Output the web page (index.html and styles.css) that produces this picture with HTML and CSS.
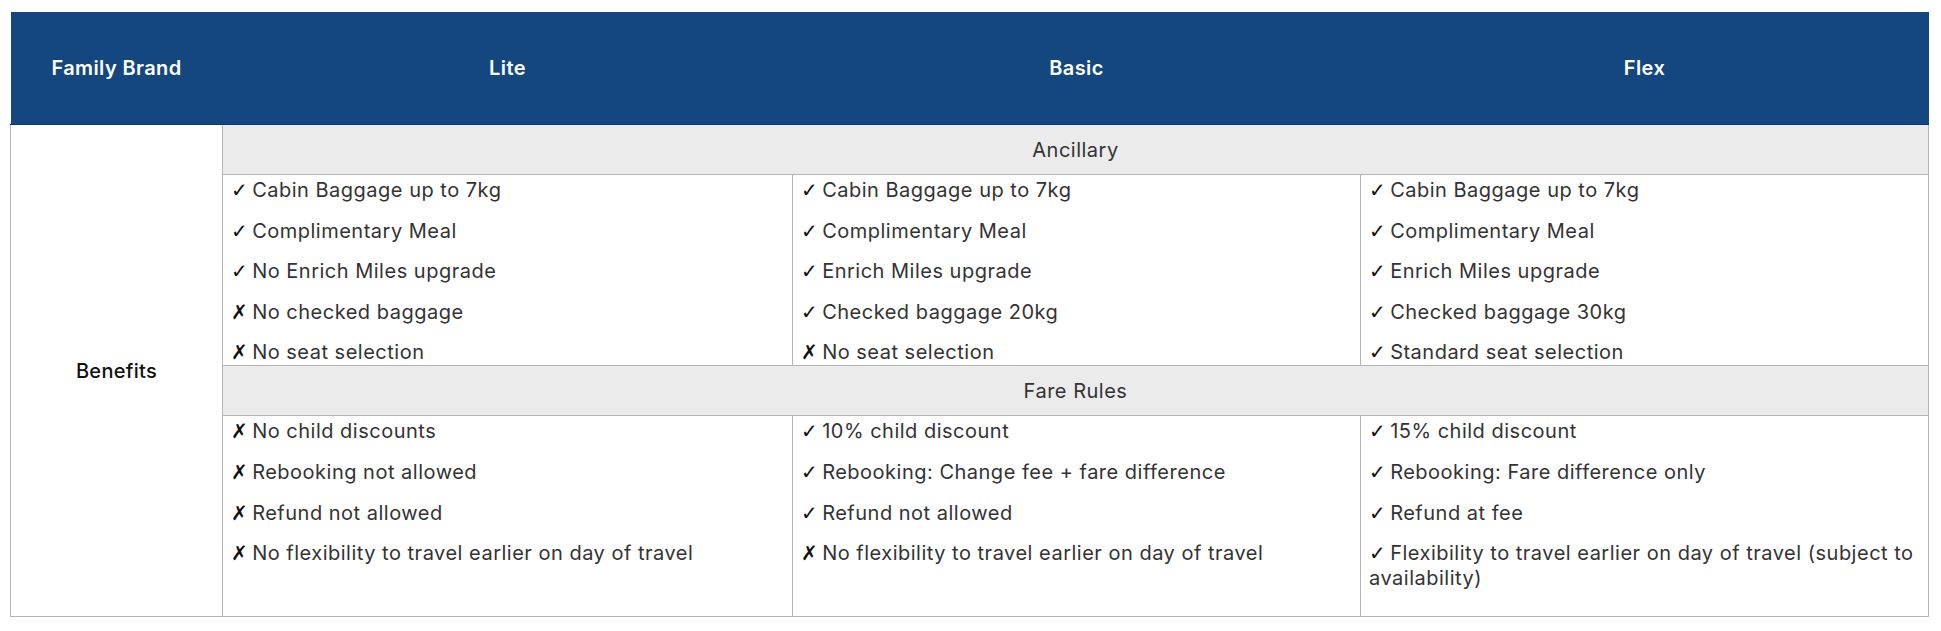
FILE: index.html
```html
<!DOCTYPE html>
<html lang="en">
<head>
<meta charset="utf-8">
<title>Family Brand</title>
<link rel="stylesheet" href="styles.css">
</head>
<body>
<div class="wrap">
<table class="fares">
  <colgroup>
    <col class="c-label">
    <col class="c-lite">
    <col class="c-basic">
    <col class="c-flex">
  </colgroup>
  <thead>
    <tr>
      <th>Family Brand</th>
      <th>Lite</th>
      <th>Basic</th>
      <th>Flex</th>
    </tr>
  </thead>
  <tbody>
    <tr>
      <td class="label" rowspan="4">Benefits</td>
      <td class="section" colspan="3">Ancillary</td>
    </tr>
    <tr>
      <td class="list">
        <p><span class="mk">✓</span> Cabin Baggage up to 7kg</p>
        <p><span class="mk">✓</span> Complimentary Meal</p>
        <p><span class="mk">✓</span> No Enrich Miles upgrade</p>
        <p><span class="mk">✗</span> No checked baggage</p>
        <p><span class="mk">✗</span> No seat selection</p>
      </td>
      <td class="list">
        <p><span class="mk">✓</span> Cabin Baggage up to 7kg</p>
        <p><span class="mk">✓</span> Complimentary Meal</p>
        <p><span class="mk">✓</span> Enrich Miles upgrade</p>
        <p><span class="mk">✓</span> Checked baggage 20kg</p>
        <p><span class="mk">✗</span> No seat selection</p>
      </td>
      <td class="list">
        <p><span class="mk">✓</span> Cabin Baggage up to 7kg</p>
        <p><span class="mk">✓</span> Complimentary Meal</p>
        <p><span class="mk">✓</span> Enrich Miles upgrade</p>
        <p><span class="mk">✓</span> Checked baggage 30kg</p>
        <p><span class="mk">✓</span> Standard seat selection</p>
      </td>
    </tr>
    <tr>
      <td class="section" colspan="3">Fare Rules</td>
    </tr>
    <tr>
      <td class="list rules">
        <p><span class="mk">✗</span> No child discounts</p>
        <p><span class="mk">✗</span> Rebooking not allowed</p>
        <p><span class="mk">✗</span> Refund not allowed</p>
        <p><span class="mk">✗</span> No flexibility to travel earlier on day of travel</p>
      </td>
      <td class="list rules">
        <p><span class="mk">✓</span> 10% child discount</p>
        <p><span class="mk">✓</span> Rebooking: Change fee + fare difference</p>
        <p><span class="mk">✓</span> Refund not allowed</p>
        <p><span class="mk">✗</span> No flexibility to travel earlier on day of travel</p>
      </td>
      <td class="list rules">
        <p><span class="mk">✓</span> 15% child discount</p>
        <p><span class="mk">✓</span> Rebooking: Fare difference only</p>
        <p><span class="mk">✓</span> Refund at fee</p>
        <p><span class="mk">✓</span> Flexibility to travel earlier on day of travel (subject to<br>availability)</p>
      </td>
    </tr>
  </tbody>
</table>
</div>
</body>
</html>
```
FILE: styles.css
```css
html, body {
  margin: 0;
  padding: 0;
  background: #ffffff;
}

body {
  font-family: "Inter", "Noto Sans", "DejaVu Sans", sans-serif;
  color: #333333;
}

.wrap {
  padding: 12px 0 0 10px;
}

.fares {
  width: 1918px;
  border-collapse: collapse;
  table-layout: fixed;
}

.c-label { width: 212px; }
.c-lite { width: 570px; }
.c-basic { width: 568px; }
.c-flex { width: 568px; }

.fares th {
  height: 112px;
  padding: 0;
  background: #144780;
  border-bottom: 1px solid #0e3a6b;
  color: #ffffff;
  font-size: 20px;
  font-weight: 600;
  letter-spacing: 0.4px;
  text-align: center;
  vertical-align: middle;
}

.fares td {
  border: 1px solid #b4b4b4;
  padding: 0;
}

.label {
  text-align: center;
  vertical-align: middle;
  font-size: 20px;
  font-weight: 500;
  letter-spacing: 0.3px;
  color: #111111;
}

.section {
  height: 49px;
  background: #ebebeb;
  text-align: center;
  vertical-align: middle;
  font-size: 20px;
  letter-spacing: 0.5px;
  color: #333333;
}

.list {
  vertical-align: top;
  font-size: 20px;
  letter-spacing: 0.5px;
  line-height: 25px;
}

.fares td.list {
  padding: 3px 8px 0 8px;
}

.fares td.rules {
  padding-bottom: 25px;
}

.list p {
  margin: 0 0 15.6px 0;
}

.list p:last-child {
  margin-bottom: 0;
}

.mk {
  display: inline-block;
  width: 15px;
  line-height: 0;
  font-family: "DejaVu Sans", sans-serif;
  font-size: 20px;
  font-weight: 700;
  color: #111111;
  letter-spacing: 0;
}
```
